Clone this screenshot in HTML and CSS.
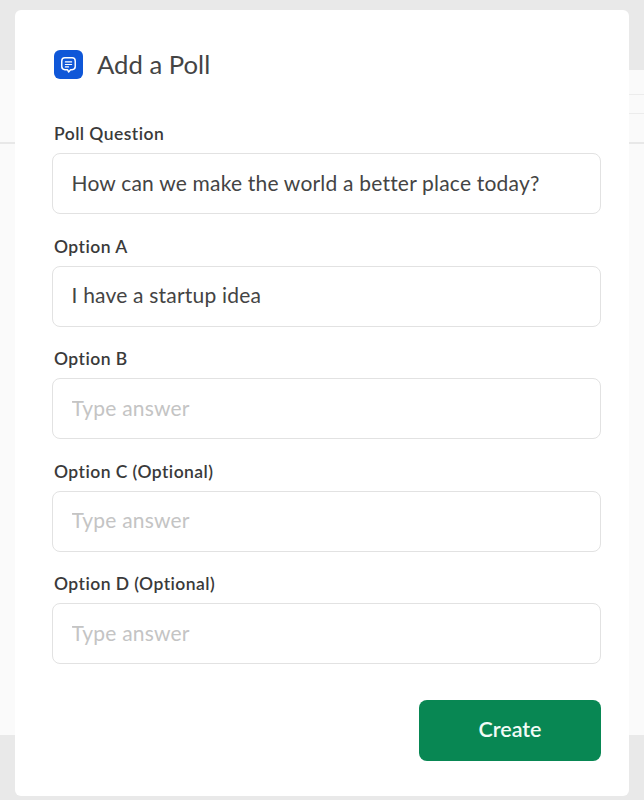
FILE: index.html
```html
<!DOCTYPE html>
<html lang="en">
<head>
<meta charset="utf-8">
<title>Add a Poll</title>
<link rel="stylesheet" href="styles.css">
</head>
<body>
<div class="backdrop">
  <div class="band-top"></div>
  <div class="band-mid">
    <div class="row row-a"></div>
    <div class="row row-b"></div>
    <div class="row row-c"></div>
  </div>
  <div class="band-bottom"></div>
</div>
<main class="modal">
  <header class="modal-head">
    <span class="badge">
      <svg viewBox="0 0 28 28" width="29" height="29" fill="none" stroke="#fff" stroke-linecap="round" stroke-linejoin="round">
        <path d="M10.500 7.500h7a3 3 0 0 1 3 3v5.500a3 3 0 0 1-3 3h-1.500l-1.900 2.200-1.100-2.200h-2.500a3 3 0 0 1-3-3v-5.500a3 3 0 0 1 3-3z" stroke-width="1.400"/>
        <path d="M11 11.500h6M11 14h6M11 16.300h3" stroke-width="1.200"/>
      </svg>
    </span>
    <h1 class="title">Add a Poll</h1>
  </header>
  <form class="form">
    <div class="field">
      <label class="label">Poll Question</label>
      <input class="input" type="text" value="How can we make the world a better place today?">
    </div>
    <div class="field">
      <label class="label">Option A</label>
      <input class="input" type="text" value="I have a startup idea">
    </div>
    <div class="field">
      <label class="label">Option B</label>
      <input class="input" type="text" placeholder="Type answer">
    </div>
    <div class="field">
      <label class="label">Option C (Optional)</label>
      <input class="input" type="text" placeholder="Type answer">
    </div>
    <div class="field">
      <label class="label">Option D (Optional)</label>
      <input class="input" type="text" placeholder="Type answer">
    </div>
    <div class="actions">
      <button class="create" type="button">Create</button>
    </div>
  </form>
</main>
</body>
</html>
```
FILE: styles.css
```css
* { box-sizing: border-box; }
html, body { margin: 0; height: 800px; overflow: hidden; }
body {
  position: relative;
  background: #fafafa;
  font-family: "Lato", "Liberation Sans", sans-serif;
  color: #3a3a3a;
}
.backdrop { position: absolute; inset: 0; display: flex; flex-direction: column; }
.band-top { height: 70px; background: #e9e9e9; }
.band-mid { flex: 1; background: #fafafa; }
.band-bottom { height: 65px; background: #e9e9e9; }
.row { border-bottom: 1px solid #ececec; }
.row-a { height: 25px; margin-left: 20px; }
.row-b { height: 19px; margin-left: 20px; }
.row-c { height: 30px; border-bottom: 2px solid #e8e8e8; }
.modal {
  position: absolute;
  left: 15px;
  top: 10px;
  width: 614px;
  height: 786px;
  background: #fff;
  border-radius: 6px;
  padding: 39px 28px 0 37px;
}
.modal-head { display: flex; align-items: center; gap: 14px; margin-left: 2px; height: 30px; }
.badge {
  width: 29px; height: 29px; border-radius: 6px;
  background: #0f57d8;
  display: block; flex: none;
}
.badge svg { display: block; }
.title { margin: 0; font-size: 25.700px; font-weight: 400; color: #444; line-height: 30px; }
.form { margin-top: 45px; display: flex; flex-direction: column; gap: 14px; }
.field { display: flex; flex-direction: column; height: 98.500px; }
.label { margin-left: 2px; font-size: 17.500px; font-weight: 600; letter-spacing: 0.45px; color: #3a3a3a; line-height: 20px; height: 29px; }
.input {
  height: 61px; width: 549px;
  border: 1.500px solid #e2e2e2;
  border-radius: 8px;
  padding: 0 18.500px 3px;
  font: 400 21px "Lato", "Liberation Sans", sans-serif;
  letter-spacing: 0.2px;
  color: #444;
  background: #fff;
  outline: none;
}
.input::placeholder { color: #c4c4c4; opacity: 1; }
.actions { display: flex; justify-content: flex-end; margin-top: 13px; }
.create {
  width: 182px; height: 61px;
  border: 0; border-radius: 8px;
  padding: 0 0 2px;
  background: #088753;
  color: #f2fbf6;
  font: 600 21.500px "Lato", "Liberation Sans", sans-serif;
}
```
